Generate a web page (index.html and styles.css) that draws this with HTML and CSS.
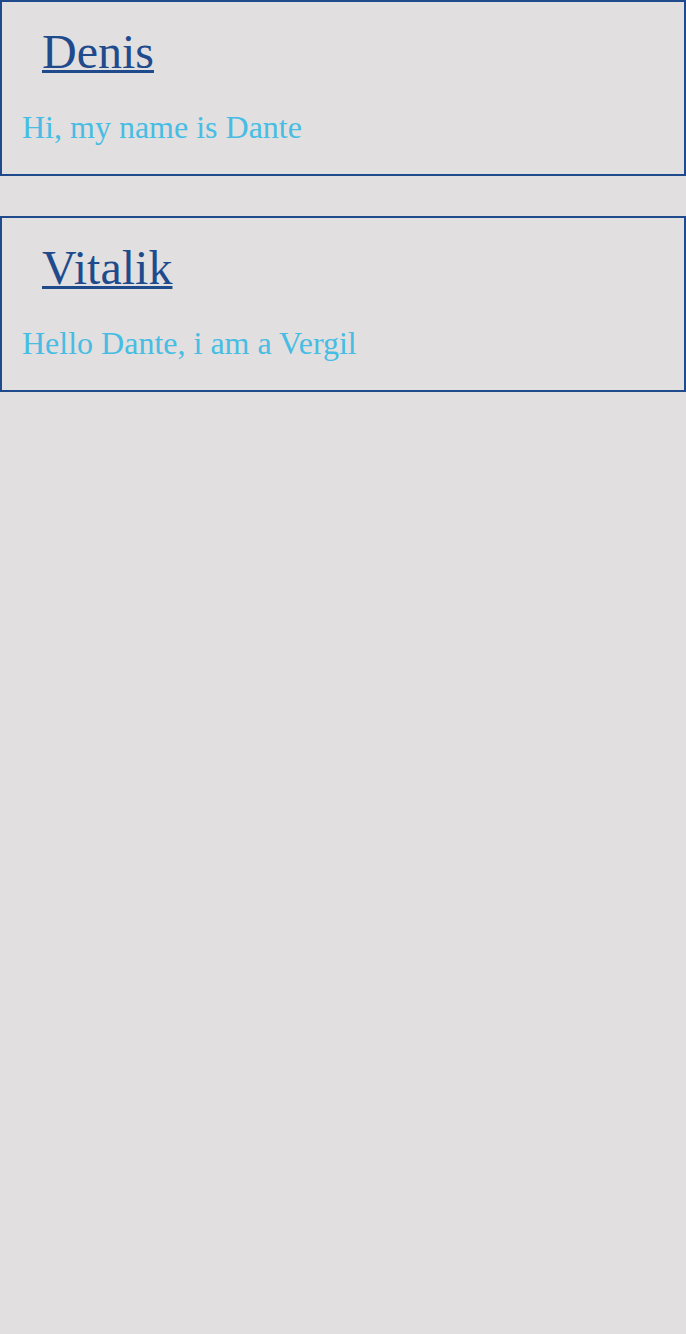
FILE: index.html
```html
<!DOCTYPE html>
<html>
<head>
<meta charset="utf-8">
<link rel="stylesheet" href="styles.css">
</head>
<body>
<div class="list">
  <div class="card">
    <a class="name" href="#">Denis</a>
    <p class="msg">Hi, my name is Dante</p>
  </div>
  <div class="card">
    <a class="name" href="#">Vitalik</a>
    <p class="msg">Hello Dante, i am a Vergil</p>
  </div>
</div>
</body>
</html>
```
FILE: styles.css
```css
html, body {
  margin: 0;
  padding: 0;
  background: #e1dfe0;
  font-family: "Liberation Serif", "Times New Roman", serif;
}
.list {
  display: flex;
  flex-direction: column;
  gap: 40px;
}
.card {
  border: 2px solid #1f4b8c;
  padding: 23px 20px 29px;
  display: flex;
  flex-direction: column;
  align-items: flex-start;
  gap: 31px;
}
.name {
  margin-left: 20px;
  font-size: 48px;
  line-height: 53px;
  color: #1f4b8c;
  text-decoration: underline;
  text-decoration-thickness: 3px;
}
.msg {
  margin: 0;
  font-size: 32px;
  line-height: 36px;
  color: #47bde3;
}
```
